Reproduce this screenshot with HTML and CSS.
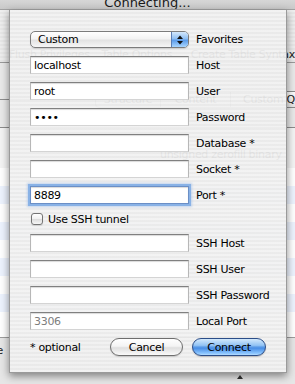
FILE: index.html
```html
<!DOCTYPE html>
<html>
<head>
<meta charset="utf-8">
<link rel="stylesheet" href="styles.css">
</head>
<body>
<div class="window">
  <div class="titlebar"><span class="title">Connecting...</span></div>
  <div class="toolbar">
    <div class="tool tool-1">Flush Privileges</div>
    <div class="tool tool-2">Table Options</div>
    <div class="tool tool-3">Create Table Syntax</div>
  </div>
  <div class="tabarea">
    <div class="segmented">
      <span class="seg seg-1">Structure</span>
      <span class="seg seg-2">Content</span>
      <span class="seg seg-3">Custom Query</span>
    </div>
  </div>
  <div class="tabbody">
    <div class="table-head"></div>
    <div class="form-row"><span class="opts">unsigned zerofill binary</span></div>
    <div class="rows">
      <div class="row"></div>
      <div class="row alt"></div>
      <div class="row"></div>
      <div class="row alt"></div>
      <div class="row"></div>
      <div class="row alt"></div>
      <div class="row"></div>
      <div class="row alt"></div>
      <div class="row"></div>
    </div>
  </div>
  <div class="bottombar">
    <span class="bottom-text">Table</span>
    <svg class="caret" width="6" height="4" viewBox="0 0 6 4"><polygon points="0,4 3,0 6,4" fill="#333"/></svg>
  </div>
</div>

<div class="sheet">
  <div class="form">
    <div class="popup">
      <span class="popup-text">Custom</span>
      <span class="popup-arrows">
        <svg width="16" height="15" viewBox="0 0 16 15"><polygon points="5,7 8,3.5 11,7" fill="#111"/><polygon points="5,9 8,12.5 11,9" fill="#111"/></svg>
      </span>
    </div>
    <span class="label">Favorites</span>

    <input class="field" type="text" value="localhost"><span class="label">Host</span>
    <input class="field" type="text" value="root"><span class="label">User</span>
    <input class="field" type="password" value="root"><span class="label">Password</span>
    <input class="field" type="text" value=""><span class="label">Database *</span>
    <input class="field" type="text" value=""><span class="label">Socket *</span>
    <input class="field focus" type="text" value="8889"><span class="label">Port *</span>

    <div class="check-row"><span class="checkbox"></span><span class="check-label">Use SSH tunnel</span></div>

    <input class="field" type="text" value=""><span class="label">SSH Host</span>
    <input class="field" type="text" value=""><span class="label">SSH User</span>
    <input class="field" type="text" value=""><span class="label">SSH Password</span>
    <input class="field muted" type="text" value="3306"><span class="label">Local Port</span>
  </div>
  <div class="actions">
    <span class="note">* optional</span>
    <div class="buttons">
      <button class="btn cancel" type="button">Cancel</button>
      <button class="btn connect" type="button">Connect</button>
    </div>
  </div>
</div>
</body>
</html>
```

FILE: styles.css
```css
* { box-sizing: border-box; }

html, body {
  margin: 0;
  padding: 0;
}

body {
  width: 295px;
  height: 384px;
  overflow: hidden;
  position: relative;
  font-family: "DejaVu Sans", "Liberation Sans", sans-serif;
  font-size: 11px;
  letter-spacing: -0.3px;
  color: #000;
  background: #e8e8e8;
}

/* ---------- background window ---------- */
.window {
  width: 295px;
  height: 384px;
  display: flex;
  flex-direction: column;
}

.titlebar {
  height: 10px;
  overflow: hidden;
  text-align: center;
  background: linear-gradient(#d6d6d6, #c9c9c9);
  border-bottom: 1px solid #a2a2a2;
  font-size: 13px;
  letter-spacing: 0;
}

.title {
  display: block;
  line-height: 13px;
  margin-top: -4px;
  color: #1a1a1a;
}

.toolbar {
  height: 53px;
  display: flex;
  align-items: flex-end;
  padding: 0 0 1px 9px;
  background: repeating-linear-gradient(#eeeeee 0 2px, #e7e7e7 2px 4px);
  border-bottom: 1px solid #9a9a9a;
  color: #222;
  white-space: nowrap;
}

.tool { line-height: 13px; }
.tool-1 { width: 106px; }
.tool-2 { width: 102px; }
.tool-3 { flex: 1; }

.tabarea {
  height: 45px;
  display: flex;
  align-items: flex-end;
  padding-left: 95px;
  background: linear-gradient(transparent 36px, #8e8e8e 36px, #8e8e8e 37px, transparent 37px),
              #e9e9e9;
  overflow: hidden;
}

.segmented {
  display: flex;
  height: 17px;
  border: 1px solid #8a8a8a;
  border-radius: 4px;
  background: linear-gradient(#fcfcfc, #e6e6e6);
  white-space: nowrap;
}

.seg {
  display: flex;
  align-items: center;
  justify-content: center;
  color: #222;
  border-right: 1px solid #9a9a9a;
}
.seg-1 { width: 65px; }
.seg-2 { width: 70px; }
.seg-3 { width: 100px; justify-content: flex-start; padding-left: 12px; border-right: 0; }

.tabbody {
  height: 229px;
  background: #ffffff;
  display: flex;
  flex-direction: column;
}

.table-head {
  height: 20px;
  background: #e9e9e9;
  border-bottom: 1px solid #8c8c8c;
}

.form-row {
  height: 40px;
  padding: 20px 0 0 160px;
  line-height: 13px;
  white-space: nowrap;
  color: #222;
  background: #f4f4f4;
}

.row { height: 18px; background: #ffffff; }
.row.alt { background: #edf3fe; }

.bottombar {
  flex: 1;
  display: flex;
  align-items: flex-start;
  border-top: 1px solid #9c9c9c;
  background: #e6e6e6;
}

.bottom-text {
  margin: 6px 0 0 -24px;
  line-height: 13px;
  color: #222;
}

.caret {
  margin: 37px 52px 0 auto;
}

/* ---------- sheet ---------- */
.sheet {
  position: absolute;
  top: 10px;
  left: 9px;
  width: 278px;
  height: 363px;
  padding: 21px 20px 17px 20px;
  border: 1px solid #9a9a9a;
  border-top: 0;
  background: repeating-linear-gradient(rgba(242, 242, 242, 0.94) 0 2px, rgba(234, 234, 234, 0.94) 2px 4px);
  box-shadow: 0 3px 8px rgba(0, 0, 0, 0.45);
  display: flex;
  flex-direction: column;
}

.form {
  display: grid;
  grid-template-columns: 159px 1fr;
  column-gap: 7px;
  row-gap: 8px;
  align-items: center;
}

.label {
  white-space: nowrap;
  line-height: 13px;
}

.popup {
  height: 17px;
  display: flex;
  align-items: center;
  border: 1px solid #7c7c7c;
  border-radius: 5px;
  overflow: hidden;
  background: linear-gradient(#ffffff, #f3f3f3 45%, #e3e3e3 55%, #f6f6f6);
  box-shadow: 0 1px 1px rgba(0, 0, 0, 0.12);
}

.popup-text {
  flex: 1;
  padding-left: 7px;
  line-height: 13px;
}

.popup-arrows {
  width: 17px;
  height: 100%;
  display: flex;
  align-items: center;
  justify-content: center;
  border-left: 1px solid #5a7db5;
  background: linear-gradient(#d4e8fc, #8fbff3 45%, #5b9be9 55%, #a9d6ff);
}

.field {
  display: block;
  width: 159px;
  height: 18px;
  margin: 0;
  padding: 0 3px;
  border: 1px solid;
  border-color: #808080 #b7b7b7 #d4d4d4 #b7b7b7;
  background: #ffffff;
  box-shadow: inset 0 1px 1px rgba(0, 0, 0, 0.15);
  font-family: "DejaVu Sans", "Liberation Sans", sans-serif;
  font-size: 11px;
  letter-spacing: -0.3px;
  color: #000;
  outline: none;
  border-radius: 0;
}

.field.focus {
  border-color: #6b8fc6;
  box-shadow: 0 0 0 2px #89b2e6, 0 0 2px 3px rgba(137, 178, 230, 0.45), inset 0 1px 1px rgba(0, 0, 0, 0.15);
}

.field.muted { color: #7d7d7d; }

.check-row {
  grid-column: 1 / -1;
  height: 14px;
  display: flex;
  align-items: center;
  gap: 5px;
  padding-left: 1px;
}

.checkbox {
  width: 12px;
  height: 12px;
  border: 1px solid #747474;
  border-radius: 3px;
  background: linear-gradient(#ffffff, #f0f0f0 50%, #dedede 55%, #f7f7f7);
  box-shadow: 0 1px 1px rgba(0, 0, 0, 0.12);
}

.check-label { line-height: 13px; white-space: nowrap; }

.actions {
  margin-top: 8px;
  height: 18px;
  display: flex;
  align-items: center;
  justify-content: space-between;
}

.note { line-height: 13px; white-space: nowrap; }

.buttons {
  display: flex;
  gap: 9px;
}

.btn {
  height: 18px;
  margin: 0;
  padding: 0;
  border-radius: 9px;
  display: flex;
  align-items: center;
  justify-content: center;
  font-family: "DejaVu Sans", "Liberation Sans", sans-serif;
  font-size: 11px;
  letter-spacing: -0.3px;
  color: #000;
  line-height: 13px;
}

.cancel {
  width: 73px;
  border: 1px solid #6e6e6e;
  background: linear-gradient(#ffffff, #f4f4f4 45%, #dfdfdf 55%, #fafafa);
  box-shadow: 0 1px 1px rgba(0, 0, 0, 0.15);
}

.connect {
  width: 74px;
  border: 1px solid #2b4d88;
  background: linear-gradient(#d3e9fc 0%, #92c3f4 40%, #5b9be8 50%, #4a8fe6 58%, #8cc6ff 90%, #b5dcff 100%);
  box-shadow: 0 1px 1px rgba(0, 0, 0, 0.2);
}
```
